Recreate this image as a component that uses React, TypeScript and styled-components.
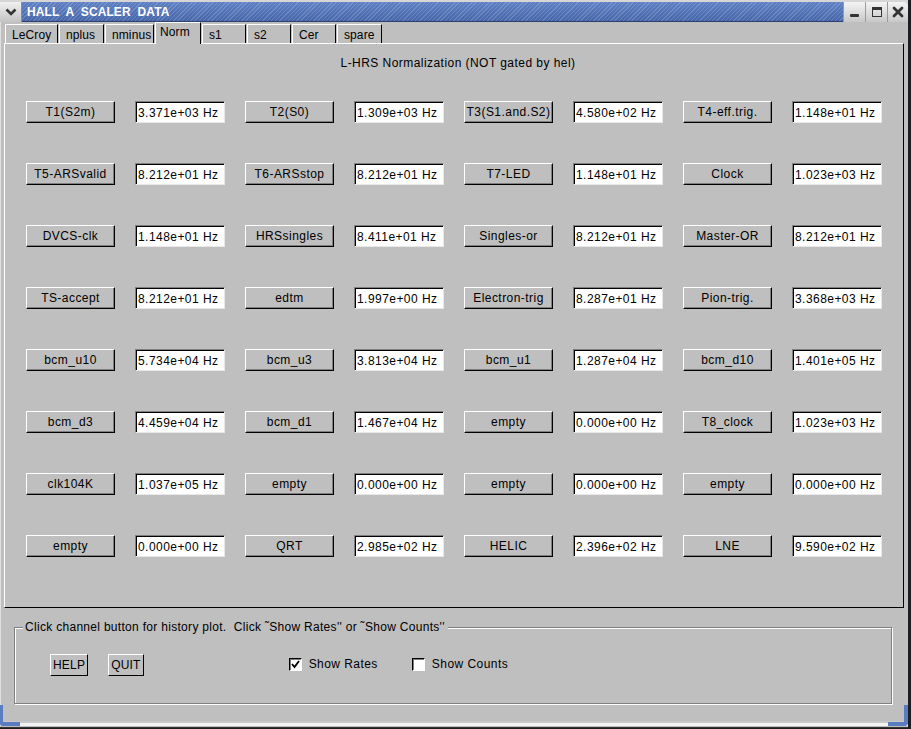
import React from "react";
import styled, { createGlobalStyle } from "styled-components";

const GlobalStyle = createGlobalStyle`
  html, body {
    margin: 0;
    padding: 0;
    background: #1e1e22;
  }
  body {
    font-family: "Liberation Sans", Helvetica, Arial, sans-serif;
    font-size: 12px;
    letter-spacing: 0.45px;
    color: #000;
  }
`;

const Window = styled.div`
  position: relative;
  width: 908px;
  height: 728px;
  background: #bfbfbf;
  display: flex;
  flex-direction: column;
  box-sizing: border-box;
  border-bottom: 1px solid #333;
  overflow: hidden;
`;

const TitleBar = styled.div`
  display: flex;
  height: 22px;
  box-sizing: border-box;
  padding-top: 2px;
  background: #d6d6d6;
`;

const MenuButton = styled.div`
  width: 22px;
  height: 20px;
  display: flex;
  align-items: center;
  justify-content: center;
  background: linear-gradient(#f0f0f0, #c4c4c4);
  border-right: 1px solid #8a8a8a;
  box-sizing: border-box;
`;

const TitleStrip = styled.div`
  flex: 1;
  height: 20px;
  display: flex;
  align-items: center;
  padding-left: 5px;
  box-sizing: border-box;
  border-bottom: 1px solid #2c3f70;
  background:
    repeating-linear-gradient(
      135deg,
      rgba(255, 255, 255, 0.16) 0 1px,
      rgba(255, 255, 255, 0) 1px 3px
    ),
    linear-gradient(#5f80c4, #4766aa);
`;

const TitleText = styled.span`
  color: #fff;
  font-weight: bold;
  font-size: 12px;
  letter-spacing: 0.1px;
  white-space: pre;
`;

const WinButton = styled.div`
  width: 22px;
  height: 20px;
  display: flex;
  align-items: center;
  justify-content: center;
  background: linear-gradient(#f4f4f4, #c8c8c8);
  border-left: 1px solid #9a9a9a;
  box-sizing: border-box;
`;

const CloseButton = styled(WinButton)`
  width: 21px;
  border-top-right-radius: 5px;
`;

const Body = styled.div`
  flex: 1;
  display: flex;
  flex-direction: column;
  padding: 0 4px 0 3px;
  border-left: 1px solid #e0e0e0;
`;

const TabRow = styled.div`
  display: flex;
  align-items: flex-end;
  height: 21px;
  padding-left: 1px;
  position: relative;
  z-index: 1;
`;

const Tab = styled.div<{ $active?: boolean; $w: number }>`
  width: ${(p) => p.$w}px;
  height: ${(p) => (p.$active ? 22 : 19)}px;
  margin-bottom: ${(p) => (p.$active ? -1 : 0)}px;
  box-sizing: border-box;
  padding-left: ${(p) => (p.$active ? 4 : 6)}px;
  padding-top: ${(p) => (p.$active ? 2 : 3)}px;
  background: #bfbfbf;
  border-top: 1px solid #fff;
  border-left: 1px solid #fff;
  border-right: 1px solid #000;
  margin-right: 1px;
  line-height: 14px;
  white-space: nowrap;
  overflow: hidden;
  letter-spacing: 0.1px;
`;

const Frame = styled.div`
  height: 565px;
  box-sizing: border-box;
  border-top: 1px solid #fff;
  border-left: 1px solid #fff;
  border-right: 1px solid #000;
  border-bottom: 1px solid #000;
  display: flex;
  flex-direction: column;
  align-items: center;
`;

const Heading = styled.div`
  margin-top: 12px;
  line-height: 14px;
  height: 14px;
  margin-left: 8px;
`;

const Grid = styled.div`
  margin-top: 31px;
  align-self: flex-start;
  margin-left: 21px;
  display: grid;
  grid-template-columns: repeat(4, 89px 90px);
  column-gap: 20px;
  row-gap: 40px;
`;

const ChanButton = styled.div`
  height: 22px;
  box-sizing: border-box;
  border-top: 1px solid #fff;
  border-left: 1px solid #fff;
  border-right: 1px solid #000;
  border-bottom: 1px solid #000;
  box-shadow: inset -1px -1px 0 #7f7f7f;
  display: flex;
  align-items: center;
  justify-content: center;
  white-space: nowrap;
`;

const Value = styled.div`
  height: 22px;
  box-sizing: border-box;
  background: #fff;
  border-top: 1px solid #7f7f7f;
  border-left: 1px solid #7f7f7f;
  border-right: 1px solid #e8e8e8;
  border-bottom: 1px solid #e8e8e8;
  box-shadow: inset 1px 1px 0 #000;
  display: flex;
  align-items: center;
  padding-left: 2px;
  padding-top: 1px;
  white-space: nowrap;
`;

const Lower = styled.div`
  height: 112px;
  box-sizing: border-box;
  padding: 12px 12px 0 10px;
`;

const Group = styled.fieldset`
  margin: 0;
  height: 84px;
  box-sizing: border-box;
  border: 1px solid #808080;
  box-shadow: 1px 1px 0 #fff, inset 1px 1px 0 #fff;
  padding: 20px 0 0 0;
  display: flex;
  align-items: flex-start;
`;

const Legend = styled.legend`
  margin-left: 8px;
  padding: 0 3px 0 2px;
  background: #bfbfbf;
  line-height: 14px;
  white-space: pre;
  letter-spacing: 0.3px;
`;

const SmallButton = styled(ChanButton)<{ $left: number }>`
  padding: 0 2px;
  margin-left: ${(p) => p.$left}px;
  box-shadow: none;
  letter-spacing: 0.2px;
`;

const Check = styled.label<{ $left: number }>`
  display: flex;
  align-items: center;
  gap: 7px;
  margin-top: 3px;
  margin-left: ${(p) => p.$left}px;
`;

const CheckBox = styled.span`
  width: 13px;
  height: 13px;
  box-sizing: border-box;
  background: #fff;
  border-top: 1px solid #000;
  border-left: 1px solid #000;
  border-right: 1px solid #fff;
  border-bottom: 1px solid #fff;
  box-shadow: inset 1px 1px 0 #7f7f7f;
  display: flex;
  align-items: center;
  justify-content: center;
`;

const BottomEdge = styled.div`
  height: 8px;
  border-top: 1px solid #bfbfbf;
  background: linear-gradient(#c8c8c8 0 2px, #f2f2f2 2px 5px, #bdbdbd 5px);
`;

const Corner = styled.div<{ $side: "left" | "right" }>`
  position: absolute;
  bottom: 1px;
  ${(p) => (p.$side === "left" ? "left: 0;" : "right: 0;")}
  width: 20px;
  height: 21px;
  box-sizing: border-box;
  border-bottom: 4px solid #5a7cc0;
  ${(p) =>
    p.$side === "left"
      ? "border-left: 3px solid #5a7cc0; border-bottom-left-radius: 3px;"
      : "border-right: 4px solid #5a7cc0; border-bottom-right-radius: 4px;"}
`;

const tabs = [
  { name: "LeCroy", w: 53 },
  { name: "nplus", w: 45 },
  { name: "nminus", w: 49 },
  { name: "Norm", w: 46, active: true },
  { name: "s1", w: 44 },
  { name: "s2", w: 44 },
  { name: "Cer", w: 44 },
  { name: "spare", w: 45 },
];

const channels: [string, string][] = [
  ["T1(S2m)", "3.371e+03"],
  ["T2(S0)", "1.309e+03"],
  ["T3(S1.and.S2)", "4.580e+02"],
  ["T4-eff.trig.", "1.148e+01"],
  ["T5-ARSvalid", "8.212e+01"],
  ["T6-ARSstop", "8.212e+01"],
  ["T7-LED", "1.148e+01"],
  ["Clock", "1.023e+03"],
  ["DVCS-clk", "1.148e+01"],
  ["HRSsingles", "8.411e+01"],
  ["Singles-or", "8.212e+01"],
  ["Master-OR", "8.212e+01"],
  ["TS-accept", "8.212e+01"],
  ["edtm", "1.997e+00"],
  ["Electron-trig", "8.287e+01"],
  ["Pion-trig.", "3.368e+03"],
  ["bcm_u10", "5.734e+04"],
  ["bcm_u3", "3.813e+04"],
  ["bcm_u1", "1.287e+04"],
  ["bcm_d10", "1.401e+05"],
  ["bcm_d3", "4.459e+04"],
  ["bcm_d1", "1.467e+04"],
  ["empty", "0.000e+00"],
  ["T8_clock", "1.023e+03"],
  ["clk104K", "1.037e+05"],
  ["empty", "0.000e+00"],
  ["empty", "0.000e+00"],
  ["empty", "0.000e+00"],
  ["empty", "0.000e+00"],
  ["QRT", "2.985e+02"],
  ["HELIC", "2.396e+02"],
  ["LNE", "9.590e+02"],
];

const App: React.FC = () => {
  return (
    <>
      <GlobalStyle />
      <Window>
        <TitleBar>
          <MenuButton>
            <svg width="12" height="8" viewBox="0 0 12 8">
              <polyline points="1.5,1.5 6,6 10.5,1.5" fill="none" stroke="#333" strokeWidth="2.6" />
            </svg>
          </MenuButton>
          <TitleStrip>
            <TitleText>{"HALL  A  SCALER  DATA"}</TitleText>
          </TitleStrip>
          <WinButton>
            <svg width="12" height="12" viewBox="0 0 12 12">
              <rect x="1" y="8" width="9" height="3" rx="1" fill="#333" />
            </svg>
          </WinButton>
          <WinButton>
            <svg width="12" height="12" viewBox="0 0 12 12">
              <rect x="1.5" y="1.5" width="9" height="9" fill="none" stroke="#333" strokeWidth="1" />
              <rect x="1" y="1" width="10" height="3" fill="#333" />
            </svg>
          </WinButton>
          <CloseButton>
            <svg width="12" height="12" viewBox="0 0 12 12">
              <path d="M2 2 L10 10 M10 2 L2 10" stroke="#333" strokeWidth="2.8" strokeLinecap="round" />
            </svg>
          </CloseButton>
        </TitleBar>
        <Body>
          <TabRow>
            {tabs.map((t) => (
              <Tab key={t.name} $w={t.w} $active={t.active}>
                {t.name}
              </Tab>
            ))}
          </TabRow>
          <Frame>
            <Heading>L-HRS Normalization (NOT gated by hel)</Heading>
            <Grid>
              {channels.map(([name, val], i) => (
                <React.Fragment key={i}>
                  <ChanButton>{name}</ChanButton>
                  <Value>{val} Hz</Value>
                </React.Fragment>
              ))}
            </Grid>
          </Frame>
          <Lower>
            <Group>
              <Legend>{"Click channel button for history plot.  Click ˜Show Rates'' or ˜Show Counts''"}</Legend>
              <SmallButton $left={35}>HELP</SmallButton>
              <SmallButton $left={20}>QUIT</SmallButton>
              <Check $left={145}>
                <CheckBox>
                  <svg width="9" height="9" viewBox="0 0 9 9">
                    <polyline points="1,4 3.5,7 8,1" fill="none" stroke="#000" strokeWidth="1.8" />
                  </svg>
                </CheckBox>
                Show Rates
              </Check>
              <Check $left={34}>
                <CheckBox />
                Show Counts
              </Check>
            </Group>
          </Lower>
        </Body>
        <BottomEdge />
        <Corner $side="left" />
        <Corner $side="right" />
      </Window>
    </>
  );
};

export default App;
